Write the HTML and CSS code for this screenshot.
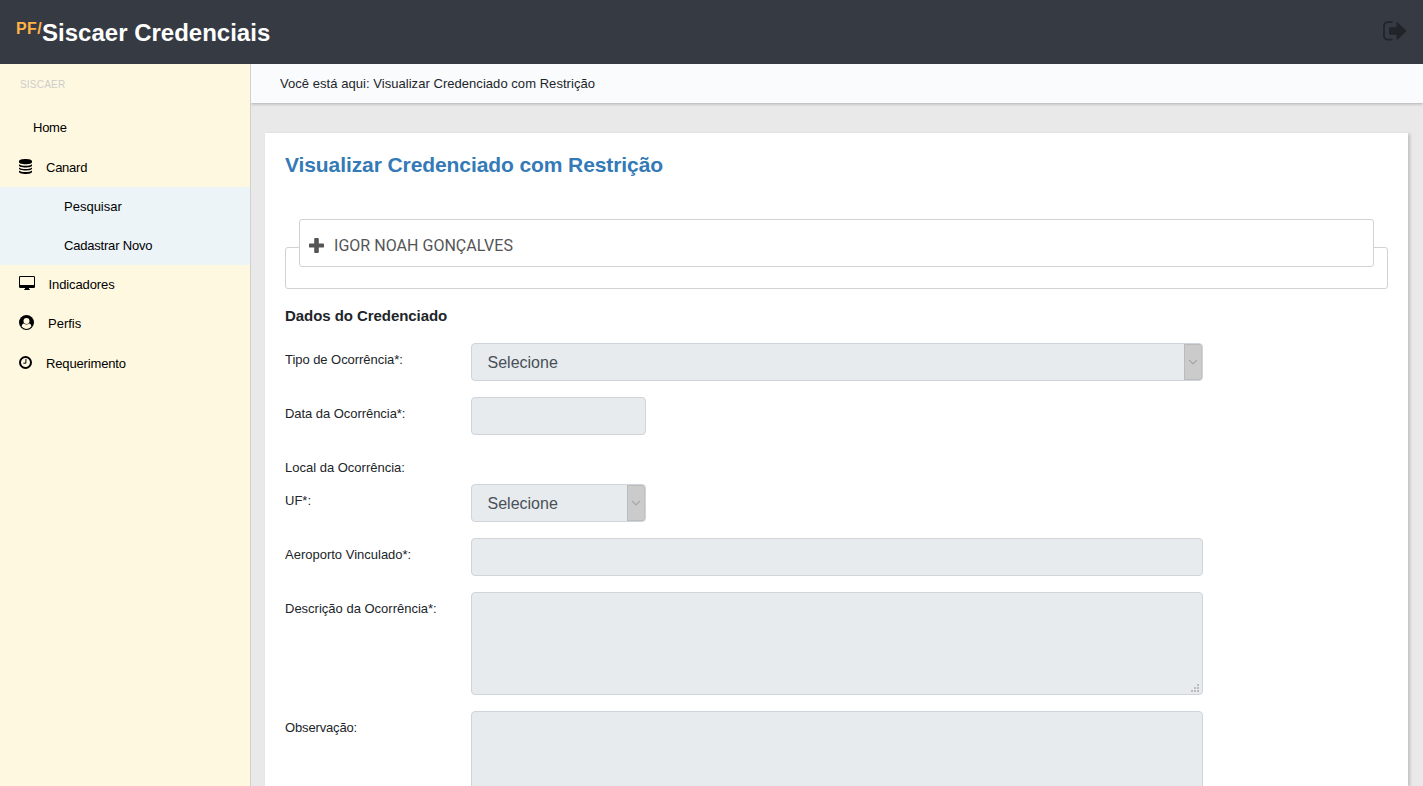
FILE: index.html
```html
<!DOCTYPE html>
<html lang="pt-BR">
<head>
<meta charset="utf-8">
<title>Siscaer Credenciais</title>
<link rel="stylesheet" href="styles.css">
</head>
<body>
<header class="topbar">
  <div class="brand"><span class="brand-prefix">PF/</span><span class="brand-name">Siscaer Credenciais</span></div>
  <svg class="logout" viewBox="0 0 24 20" width="24" height="20"><path d="M9.500 1.200H5Q1 1.200 1 5v9.500Q1 18.600 5 18.600h4.500" fill="none" stroke="#212529" stroke-width="1.700"/><path d="M7 6.300h6.500V1.500q0-1 1-.3l8.300 8.100q.6.700 0 1.400l-8.300 8.100q-1 .6-1-.4v-4.700H7q-1 0-1-1V7.300q0-1 1-1z" fill="#212529"/></svg>
</header>
<div class="shell">
  <nav class="sidebar">
    <div class="nav-heading">SISCAER</div>
    <a class="nav-home"><span class="home">Home</span></a>
    <a class="nav-item tall">
      <svg class="database" viewBox="0 0 13 15" width="13" height="15"><path d="M0 2.300C0 .9 2.900 0 6.500 0S13 .9 13 2.300v1C13 4.600 10.100 5.300 6.500 5.300S0 4.600 0 3.300zM0 5.200c1.400 1.200 3.800 1.500 6.500 1.500s5.100-.3 6.500-1.500v1.200c0 1.300-2.900 2-6.500 2S0 7.700 0 6.400zM0 8.400c1.400 1.200 3.800 1.500 6.500 1.500s5.100-.3 6.500-1.500v1.200c0 1.300-2.900 2-6.500 2S0 10.900 0 9.600zM0 11.600c1.400 1.200 3.800 1.500 6.500 1.500s5.100-.3 6.500-1.500v1.200c0 1.400-2.900 2.200-6.500 2.200S0 14.200 0 12.800z"/></svg>
      <span class="canard">Canard</span>
    </a>
    <div class="submenu">
      <a><span class="pesquisar">Pesquisar</span></a>
      <a><span class="cadastrar">Cadastrar Novo</span></a>
    </div>
    <a class="nav-item">
      <svg class="desktop" viewBox="0 0 16 14" width="16" height="14"><path fill-rule="evenodd" d="M1.300 0h13.400Q16 0 16 1.300v9.400q0 1.300-1.300 1.300H10v1l1 .4v.6H5v-.6l1-.4v-1H1.300Q0 12 0 10.700V1.300Q0 0 1.300 0zM1 1.300v7.400q0 .3.3.3h13.400q.3 0 .3-.3V1.300q0-.3-.3-.3H1.300Q1 1 1 1.300z"/></svg>
      <span class="indicadores">Indicadores</span>
    </a>
    <a class="nav-item">
      <svg class="user" viewBox="0 0 15 15" width="15" height="15"><circle cx="7.500" cy="7.500" r="7.500"/><path d="M2.600 11.500C3 9.600 3.700 8.600 4.700 8.500q2.800 2.200 5.600 0c1 .1 1.700 1.100 2.100 3a6.200 6.200 0 0 1-9.800 0z" fill="#fff8e1"/><circle cx="7.500" cy="5.900" r="3" fill="#fff8e1"/></svg>
      <span class="perfis">Perfis</span>
    </a>
    <a class="nav-item tall">
      <svg class="clock" viewBox="0 0 13 13" width="13" height="13"><circle cx="6.500" cy="6.500" r="5.500" fill="none" stroke="#000" stroke-width="2"/><path d="M6.900 3v4.200H4.300" fill="none" stroke="#000" stroke-width="1"/></svg>
      <span class="requerimento">Requerimento</span>
    </a>
  </nav>
  <main class="main">
    <div class="crumbs"><span class="crumb-text">Você está aqui: Visualizar Credenciado com Restrição</span></div>
    <section class="card">
      <h1><span class="title-text">Visualizar Credenciado com Restrição</span></h1>
      <div class="fieldset">
        <div class="legend">
          <svg viewBox="0 0 15 15" width="15" height="15"><path d="M6.100 0h2.800q.9 0 .9.900v4.500h4.300q.9 0 .9.900v2.400q0 .9-.9.900H9.800v4.500q0 .9-.9.900H6.100q-.9 0-.9-.9V9.600H.9Q0 9.600 0 8.700V6.300q0-.9.9-.9h4.300V.9q0-.9.900-.9z" fill="#555"/></svg>
          <span class="person">IGOR NOAH GONÇALVES</span>
        </div>
      </div>
      <h2><span class="section-text">Dados do Credenciado</span></h2>
      <form class="form">
        <div class="row"><label class="l-tipo">Tipo de Ocorrência*:</label>
          <div class="control select wide"><span>Selecione</span><i class="arrow"><svg viewBox="0 0 10 6" width="10" height="6"><path d="M1 .8l4 4 4-4" fill="none" stroke="#a5a5a5" stroke-width="1.200"/></svg></i></div></div>
        <div class="row"><label class="l-data">Data da Ocorrência*:</label><div class="control short"></div></div>
        <div class="row local"><label class="l-local">Local da Ocorrência:</label></div>
        <div class="row"><label>UF*:</label>
          <div class="control select short"><span>Selecione</span><i class="arrow"><svg viewBox="0 0 10 6" width="10" height="6"><path d="M1 .8l4 4 4-4" fill="none" stroke="#a5a5a5" stroke-width="1.200"/></svg></i></div></div>
        <div class="row"><label class="l-aero">Aeroporto Vinculado*:</label><div class="control wide"></div></div>
        <div class="row"><label class="l-desc">Descrição da Ocorrência*:</label>
          <div class="control wide area"><svg viewBox="0 0 8 8" width="8" height="8" shape-rendering="crispEdges"><path d="M6 0h2v2H6zM3 3h2v2H3zM6 3h2v2H6zM0 6h2v2H0zM3 6h2v2H3zM6 6h2v2H6z" fill="#bbb"/></svg></div></div>
        <div class="row"><label class="l-obs">Observação:</label><div class="control wide area"></div></div>
      </form>
    </section>
  </main>
</div>
</body>
</html>
```
FILE: styles.css
```css
* { box-sizing: border-box; }
html, body { margin: 0; height: 786px; overflow: hidden; }
body { font: 13px/20px "Liberation Sans", Arial, sans-serif; color: #212529; background: #e9e9e9; display: flex; flex-direction: column; }
svg { display: block; flex: none; }
span, label { white-space: nowrap; }
.topbar { height: 64px; flex: none; background: #363a42; display: flex; justify-content: space-between; padding: 21px 16px 0 16px; }
.brand { display: flex; align-items: flex-start; font-weight: bold; }
.brand-prefix { color: #ffb347; font-size: 16px; line-height: 16px; letter-spacing: .4px; }
.brand-name { color: #fff; font-size: 24px; line-height: 24px; }
.shell { flex: 1; display: flex; min-height: 0; }
.sidebar { width: 251px; flex: none; background: #fff8e1; border-right: 1px solid #d0d0d0; color: #000; }
.nav-heading { height: 44px; padding: 11px 20px; font-size: 10px; letter-spacing: .2px; color: #ccc; }
.nav-home { display: flex; height: 39px; align-items: center; padding-left: 33px; }
.nav-item { display: flex; height: 39px; align-items: center; padding-left: 19px; gap: 13px; }
.nav-item.tall { height: 40px; gap: 14px; }
.nav-item.tall span { padding-top: 1px; }
.nav-item svg { margin-bottom: 2px; }
.nav-item .desktop { margin-bottom: 3px; }
.home { letter-spacing: -.25px; }
.canard { letter-spacing: -.25px; }
.cadastrar { letter-spacing: -.2px; }
.indicadores { letter-spacing: -.1px; margin-left: .5px; }
.perfis { margin-left: 1px; }
.requerimento { letter-spacing: -.15px; }
.submenu { background: #ecf4f8; }
.submenu a { display: flex; height: 39px; align-items: center; padding-left: 64px; }
.main { flex: 1; min-width: 0; display: flex; flex-direction: column; overflow: hidden; }
.crumbs { height: 39px; flex: none; padding: 10px 29px; background: #fafbfd; box-shadow: 0 1px 3px rgba(0,0,0,.25); }
.crumb-text { letter-spacing: .045px; }
.card { flex: 1; margin: 30px 15px 0 14px; background: #fff; padding: 20px 20px 0; box-shadow: 2px 1px 3px rgba(0,0,0,.18); min-height: 0; }
h1 { margin: 0; font-size: 21px; line-height: 24px; letter-spacing: -.09px; color: #337ab7; height: 66px; }
.fieldset { display: grid; grid-template-rows: 28px 42px; }
.fieldset::before { content: ""; grid-area: 2 / 1; border: 1px solid #d2d2d2; border-radius: 3px; }
.legend { grid-area: 1 / 1 / 3 / 2; height: 48px; margin: 0 14px; background: #fff; border: 1px solid #d2d2d2; border-radius: 3px; display: flex; align-items: center; gap: 10px; padding: 4px 0 0 9px; color: #555; font: 16px/20px Roboto, sans-serif; z-index: 1; }
.person { padding-top: 2px; letter-spacing: .03px; }
h2 { margin: 17px 0 17px; font-size: 15px; line-height: 20px; letter-spacing: -.06px; }
.form { display: flex; flex-direction: column; gap: 16px; }
.row { display: flex; align-items: flex-start; }
.row label { width: 186px; padding-top: 7px; }
.row .l-tipo, .row .l-data { letter-spacing: -.05px; }
.row .l-obs { letter-spacing: -.15px; }
.local { height: 17px; }
.control { height: 38px; background: #e7ebee; border: 1px solid #ced4da; border-radius: 4px; flex: none; }
.wide { width: 732px; }
.short { width: 175px; }
.select { display: flex; justify-content: space-between; align-items: center; padding-left: 15.500px; color: #495057; font-size: 16px; }
.select span { padding-top: 2px; }
.arrow { width: 18px; height: 36px; background: #cbcbcb; border: 1px solid #bbb; border-right-color: #c3c3c3; border-radius: 0 3px 3px 0; display: flex; align-items: center; justify-content: center; }
.area { height: 103px; display: flex; justify-content: flex-end; align-items: flex-end; padding: 2px 3px; }
```
